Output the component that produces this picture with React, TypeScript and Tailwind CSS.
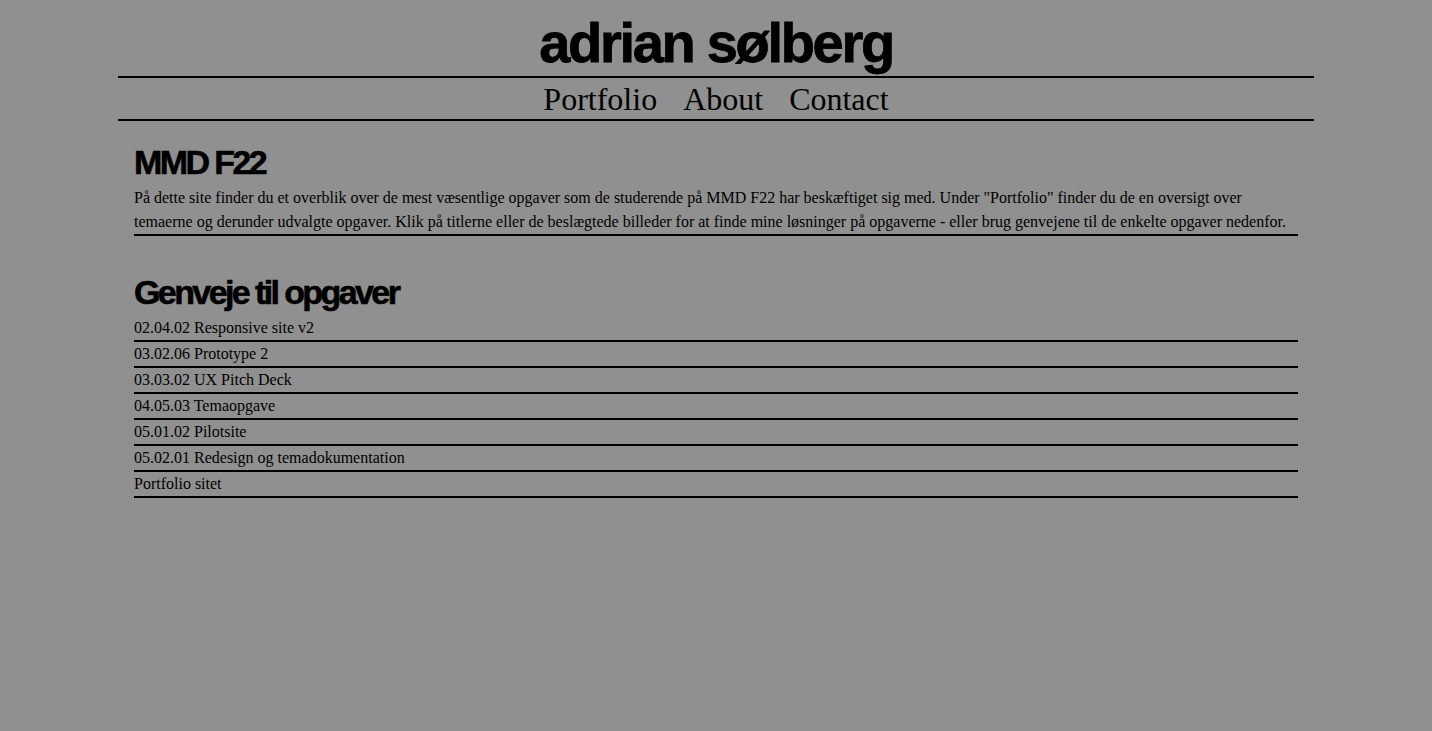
import React from "react";

const items = [
  "02.04.02 Responsive site v2",
  "03.02.06 Prototype 2",
  "03.03.02 UX Pitch Deck",
  "04.05.03 Temaopgave",
  "05.01.02 Pilotsite",
  "05.02.01 Redesign og temadokumentation",
  "Portfolio sitet",
];

export default function App() {
  return (
    <div className="min-h-[731px] w-full bg-[#909090] text-black">
      <div className="mx-auto w-[1196px]">
        <header>
          <div className="border-b-2 border-black pt-[15px] pb-[5px]">
            <h1 className="text-center font-['Liberation_Sans',Arial,sans-serif] text-[56px] font-bold leading-[56px] tracking-[-2.3px] [-webkit-text-stroke:0.8px_black]">
              adrian sølberg
            </h1>
          </div>
          <nav className="flex h-[43px] items-start justify-center gap-[26px] border-b-2 border-black pt-[2px] font-['Liberation_Serif','Times_New_Roman',serif] text-[32px] leading-[39px]">
            <a href="#">Portfolio</a>
            <a href="#">About</a>
            <a href="#">Contact</a>
          </nav>
        </header>
        <main className="px-4 font-['Liberation_Serif','Times_New_Roman',serif]">
          <section className="pt-[24px]">
            <h2 className="mb-[7px] font-['Liberation_Sans',Arial,sans-serif] text-[34px] font-bold leading-[34px] tracking-[-2.6px] [-webkit-text-stroke:0.6px_black]">
              MMD F22
            </h2>
            <p className="border-b-2 border-black text-[16px] leading-[24px]">
              På dette site finder du et overblik over de mest væsentlige opgaver som de studerende på MMD F22 har beskæftiget sig med. Under "Portfolio" finder du de en oversigt over temaerne og derunder udvalgte opgaver. Klik på titlerne eller de beslægtede billeder for at finde mine løsninger på opgaverne - eller brug genvejene til de enkelte opgaver nedenfor.
            </p>
          </section>
          <section className="pt-[39px]">
            <h2 className="mb-[7px] font-['Liberation_Sans',Arial,sans-serif] text-[34px] font-bold leading-[34px] tracking-[-2.6px] [-webkit-text-stroke:0.6px_black]">
              Genveje til opgaver
            </h2>
            <ul>
              {items.map((t) => (
                <li key={t} className="border-b-2 border-black text-[16px] leading-[24px]">
                  <a href="#">{t}</a>
                </li>
              ))}
            </ul>
          </section>
        </main>
      </div>
    </div>
  );
}
